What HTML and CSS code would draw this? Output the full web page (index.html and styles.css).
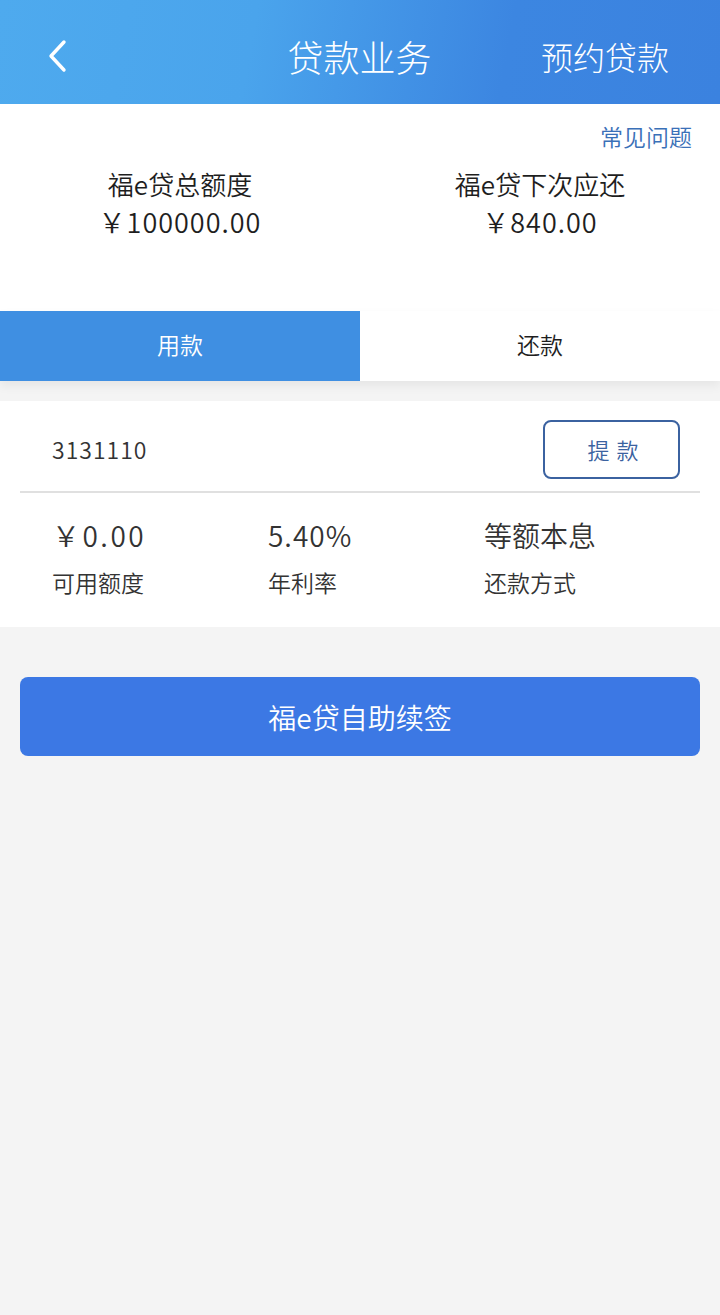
FILE: index.html
```html
<!DOCTYPE html>
<html lang="zh-CN">
<head>
  <meta charset="utf-8">
  <title>贷款业务</title>
  <meta name="viewport" content="width=device-width, initial-scale=1">
  <link rel="stylesheet" href="styles.css">
</head>
<body>
  <header class="topbar">
    <a class="back" href="#">
      <svg width="22" height="34" viewBox="0 0 22 34"><path d="M18 3 L5 17 L18 31" fill="none" stroke="#fff" stroke-width="3.4" stroke-linecap="round" stroke-linejoin="round"/></svg>
    </a>
    <h1>贷款业务</h1>
    <a class="action" href="#">预约贷款</a>
  </header>

  <section class="summary">
    <a class="faq" href="#">常见问题</a>
    <div class="totals">
      <div class="total">
        <div class="total-label">福e贷总额度</div>
        <div class="total-value num">￥100000.00</div>
      </div>
      <div class="total">
        <div class="total-label">福e贷下次应还</div>
        <div class="total-value num">￥840.00</div>
      </div>
    </div>
  </section>

  <nav class="tabs">
    <div class="tab active">用款</div>
    <div class="tab">还款</div>
  </nav>

  <section class="loan">
    <div class="loan-head">
      <span class="loan-no num">3131110</span>
      <button class="draw-btn">提 款</button>
    </div>
    <div class="loan-stats">
      <div class="stat">
        <div class="stat-value num wide">￥0.00</div>
        <div class="stat-label">可用额度</div>
      </div>
      <div class="stat">
        <div class="stat-value num">5.40%</div>
        <div class="stat-label">年利率</div>
      </div>
      <div class="stat">
        <div class="stat-value">等额本息</div>
        <div class="stat-label">还款方式</div>
      </div>
    </div>
  </section>

  <div class="renew">
    <button class="renew-btn">福e贷自助续签</button>
  </div>
</body>
</html>
```

FILE: styles.css
```css
/* 基础 */
*, *::before, *::after { box-sizing: border-box; }
html, body { margin: 0; padding: 0; }
body {
  min-height: 1315px;
  background: #f4f4f4;
  font-family: "Noto Sans CJK SC", "Noto Sans", sans-serif;
  font-weight: 350;
  color: #222;
}
a { text-decoration: none; color: inherit; }
button { font-family: inherit; font-weight: inherit; cursor: pointer; }
/* 数字略宽一些 */
.num { letter-spacing: 1px; }
.num.wide { letter-spacing: 2.5px; }

/* 顶部栏 */
.topbar {
  height: 104px;
  display: grid; grid-template-columns: 1fr auto 1fr; align-items: center;
  padding: 8px 51px 0 46px;
  background: linear-gradient(100deg, #4eaaee 0%, #4aa4ec 35%, #3c86e1 70%, #3b82df 100%);
  color: #fff;
}
.back { display: flex; width: 22px; }
.topbar h1 {
  margin: 0 0 0 4px;
  font-size: 36px; font-weight: 300;
}
.action { justify-self: end; font-size: 32px; font-weight: 300; }

/* 额度 */
.summary { background: #fff; height: 207px; padding: 16px 28px 0 0; }
.faq {
  display: block; text-align: right;
  font-size: 23px; color: #3a70b8; line-height: 32px;
}
.totals { display: flex; margin-top: 13px; }
.total { flex: 1; text-align: center; }
.total-label { font-size: 26px; line-height: 38px; color: #1e1e1e; }
.total-value { font-size: 27px; line-height: 38px; color: #1e1e1e; }
.total:last-child { margin-right: -28px; }

/* 标签页 */
.tabs {
  display: flex; height: 70px;
  background: #fff;
  box-shadow: 0 5px 10px rgba(0, 0, 0, 0.06);
  position: relative;
}
.tab {
  flex: 1; display: flex; align-items: center; justify-content: center;
  font-size: 23px; color: #1e1e1e; padding-bottom: 4px;
}
.tab.active { background: #3f8fe2; color: #fff; }

/* 贷款卡片 */
.loan { background: #fff; margin-top: 20px; padding: 0 20px; height: 226px; }
.loan-head {
  display: flex; align-items: center; justify-content: space-between;
  height: 92px; padding: 6px 20px 0 32px;
  border-bottom: 2px solid #e0e0e0;
}
.loan-no { font-size: 23px; color: #333; }
.draw-btn {
  width: 137px; height: 59px; padding: 0 0 0 4px;
  background: #fff; border: 2px solid #3b62a0; border-radius: 8px;
  font-size: 22px; color: #3b62a0; letter-spacing: 1px;
}
.loan-stats { display: grid; grid-template-columns: repeat(3, 216px); padding: 21px 0 0 32px; }
.stat-value { font-size: 28px; line-height: 42px; color: #333; }
.stat-label { font-size: 23px; line-height: 42px; color: #333; margin-top: 5px; }

/* 续签 */
.renew { padding: 50px 20px 0; }
.renew-btn {
  width: 100%; height: 79px;
  background: #3c78e4; border: 0; border-radius: 8px;
  font-size: 28px; color: #fff;
}
```
